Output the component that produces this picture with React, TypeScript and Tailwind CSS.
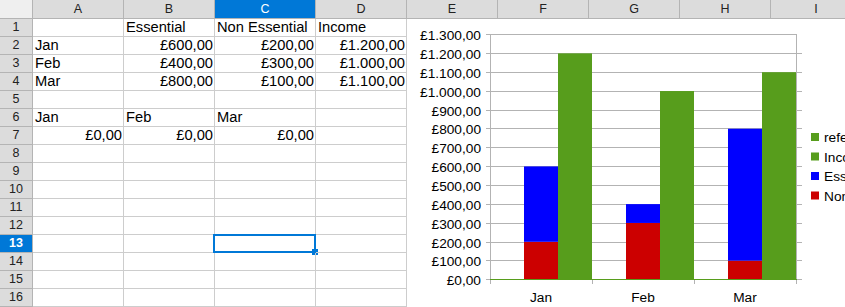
const COLS = ["A", "B", "C", "D", "E", "F", "G", "H", "I"];
const ROWS = Array.from({ length: 16 }, (_, i) => i + 1);

type Cell = { text: string; right?: boolean };

const DATA: Record<string, Cell> = {
  B1: { text: "Essential" },
  C1: { text: "Non Essential" },
  D1: { text: "Income" },
  A2: { text: "Jan" },
  B2: { text: "£600,00", right: true },
  C2: { text: "£200,00", right: true },
  D2: { text: "£1.200,00", right: true },
  A3: { text: "Feb" },
  B3: { text: "£400,00", right: true },
  C3: { text: "£300,00", right: true },
  D3: { text: "£1.000,00", right: true },
  A4: { text: "Mar" },
  B4: { text: "£800,00", right: true },
  C4: { text: "£100,00", right: true },
  D4: { text: "£1.100,00", right: true },
  A6: { text: "Jan" },
  B6: { text: "Feb" },
  C6: { text: "Mar" },
  A7: { text: "£0,00", right: true },
  B7: { text: "£0,00", right: true },
  C7: { text: "£0,00", right: true },
};

// chart geometry, in page pixels
const Y0 = 279.5;
const PER = 245 / 1300;
const yOf = (v: number) => Y0 - v * PER;
const line = (v: number) => Math.floor(yOf(v) + 0.2) + 0.5;

const GREEN = "#579d1c";
const BLUE = "#0000ff";
const RED = "#cc0000";

const months = [
  { label: "Jan", x: 490, non: 200, ess: 600, income: 1200 },
  { label: "Feb", x: 592, non: 300, ess: 400, income: 1000 },
  { label: "Mar", x: 694, non: 100, ess: 800, income: 1100 },
];

const legend = [
  { label: "reference", color: GREEN, cy: 137 },
  { label: "Income", color: GREEN, cy: 156.5 },
  { label: "Essential", color: BLUE, cy: 176 },
  { label: "Non Essential", color: RED, cy: 195.5 },
];

function Chart() {
  const ticks = Array.from({ length: 14 }, (_, i) => i * 100);
  const fmt = (v: number) =>
    "£" + (v >= 1000 ? `${Math.floor(v / 1000)}.${String(v % 1000).padStart(3, "0")}` : `${v}`) + ",00";

  return (
    <div className="absolute left-[407px] top-[19px] w-[438px] h-[288px] bg-white">
      <svg width="438" height="288" viewBox="407 19 438 288" className="block">
        {ticks.map((v) => (
          <line
            key={v}
            x1={486}
            x2={v === 1300 ? 797 : 802}
            y1={line(v)}
            y2={line(v)}
            stroke="#b3b3b3"
            strokeWidth={1}
          />
        ))}
        <line x1={490.5} x2={490.5} y1={34.5} y2={284} stroke="#b3b3b3" />
        <line x1={796.5} x2={796.5} y1={34.5} y2={284} stroke="#b3b3b3" />
        <line x1={592.5} x2={592.5} y1={279} y2={284} stroke="#b3b3b3" />
        <line x1={694.5} x2={694.5} y1={279} y2={284} stroke="#b3b3b3" />

        {months.map((m) => (
          <g key={m.label}>
            <rect x={m.x + 34} y={yOf(m.non)} width={34} height={m.non * PER} fill={RED} />
            <rect x={m.x + 34} y={yOf(m.ess)} width={34} height={(m.ess - m.non) * PER} fill={BLUE} />
            <rect x={m.x + 68} y={yOf(m.income)} width={34} height={m.income * PER} fill={GREEN} />
            <text
              x={m.x + 51}
              y={302}
              textAnchor="middle"
              fontFamily="'Liberation Sans', Arial, sans-serif"
              fontSize="13.7"
              fill="#000"
            >
              {m.label}
            </text>
          </g>
        ))}
        <line x1={490} x2={797} y1={279.5} y2={279.5} stroke={GREEN} />

        {ticks.map((v) => (
          <text
            key={v}
            x={481}
            y={line(v) + 5}
            textAnchor="end"
            fontFamily="'Liberation Sans', Arial, sans-serif"
            fontSize="13.7"
            fill="#000"
          >
            {fmt(v)}
          </text>
        ))}

        {legend.map((l) => (
          <g key={l.label}>
            <rect x={811} y={l.cy - 4} width={8} height={8} fill={l.color} />
            <text
              x={824}
              y={l.cy + 5}
              fontFamily="'Liberation Sans', Arial, sans-serif"
              fontSize="13.7"
              fill="#000"
            >
              {l.label}
            </text>
          </g>
        ))}
      </svg>
    </div>
  );
}

export default function App() {
  return (
    <div className="relative w-[845px] h-[307px] overflow-hidden bg-white font-['Liberation_Sans',Arial,sans-serif]">
      <div className="grid grid-cols-[33px_91px_91px_101px_91px_91px_91px_91px_91px_91px] grid-rows-[19px_repeat(16,18px)] w-max">
        <div className="bg-[#efefef] border-r border-b border-[#b4b4b4]" />
        {COLS.map((c) => (
          <div
            key={c}
            className={
              c === "C"
                ? "bg-[#0078d7] text-white border-r border-b border-[#b4b4b4] text-[12.5px] leading-[18px] text-center"
                : "bg-[#dcdcdc] text-[#222] border-r border-b border-[#b4b4b4] text-[12.5px] leading-[18px] text-center"
            }
          >
            {c}
          </div>
        ))}

        {ROWS.map((r) => (
          <div key={r} className="contents">
            <div
              className={
                r === 13
                  ? "bg-[#0078d7] text-white font-bold border-r border-b border-[#b4b4b4] text-[12.5px] leading-[17px] text-center"
                  : "bg-[#dcdcdc] text-[#222] border-r border-b border-[#b4b4b4] text-[12.5px] leading-[17px] text-center"
              }
            >
              {r}
            </div>
            {COLS.map((c) => {
              const cell = DATA[`${c}${r}`];
              const selected = c === "C" && r === 13;
              return (
                <div
                  key={c}
                  className={
                    "relative border-r border-b border-[#cdcdcd] text-[14.7px] leading-[17px] text-black whitespace-nowrap pl-[2px] pr-[1px] " +
                    (cell?.right ? "text-right" : "text-left")
                  }
                >
                  {cell?.text}
                  {selected && (
                    <>
                      <div className="absolute -left-[2px] -top-[1px] -right-[1px] -bottom-[1px] border-2 border-[#0078d7]" />
                      <div className="absolute -right-[3px] -bottom-[3px] w-[6px] h-[6px] bg-[#0078d7]" />
                    </>
                  )}
                </div>
              );
            })}
          </div>
        ))}
      </div>
      <Chart />
    </div>
  );
}
